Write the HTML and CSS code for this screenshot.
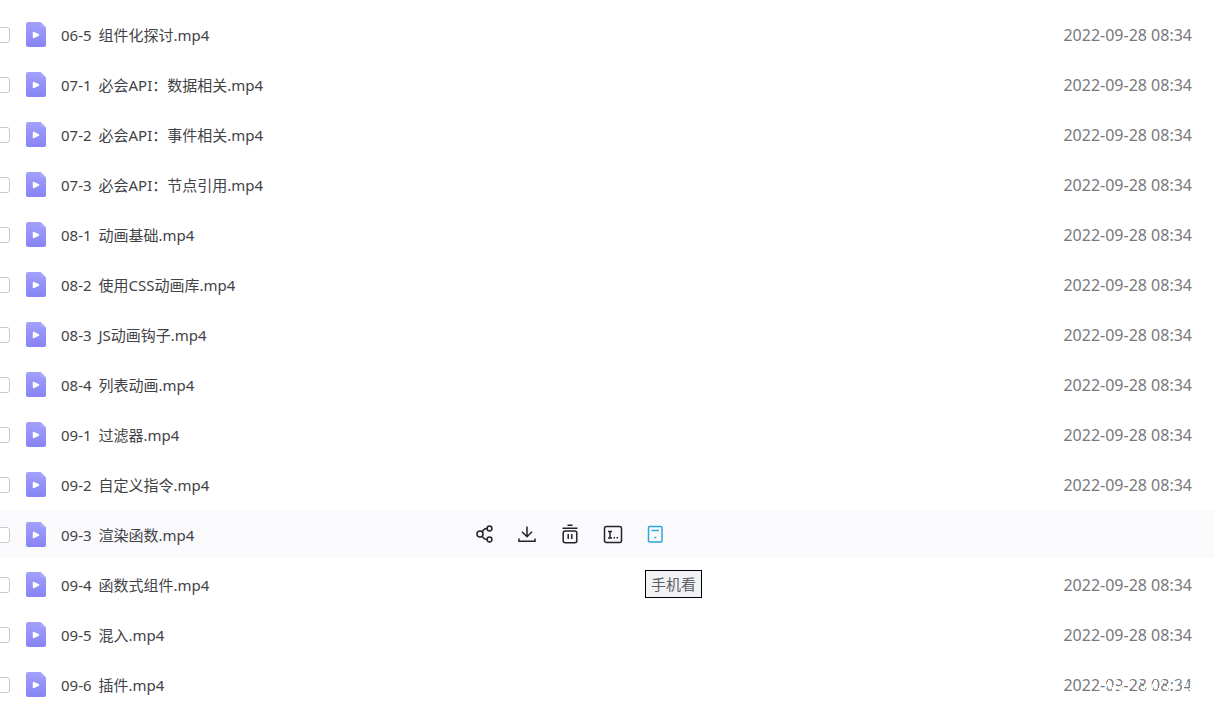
FILE: index.html
```html
<!DOCTYPE html>
<html lang="zh-CN">
<head>
  <meta charset="UTF-8">
  <meta name="viewport" content="width=device-width, initial-scale=1.0">
  <title>文件列表</title>
  <link rel="stylesheet" href="styles.css">
</head>
<body>
  <svg class="sprite" aria-hidden="true">
    <defs>
      <linearGradient id="file-fill" x1="0" y1="0" x2="0" y2="1">
        <stop offset="0" stop-color="#a3a1fb"/>
        <stop offset="1" stop-color="#8683f6"/>
      </linearGradient>
      <symbol id="video" viewBox="0 0 20 25">
        <path d="M2 0h12.500l5.500 5.500V23a2 2 0 0 1-2 2H2a2 2 0 0 1-2-2V2a2 2 0 0 1 2-2z" fill="url(#file-fill)"/>
        <path d="M14.500 0l5.500 5.500h-3.500a2 2 0 0 1-2-2z" fill="#a9a7fb"/>
        <path d="M7.500 10.500v5l5-2.500z" fill="#fff" stroke="#fff" stroke-width="1.500" stroke-linejoin="round"/>
      </symbol>
    </defs>
  </svg>

  <ul class="file-list" id="fileList"></ul>

  <template id="actions">
    <div class="actions">
      <button type="button" aria-label="分享">
        <svg viewBox="0 0 20 20"><circle cx="6" cy="10" r="3"/><circle cx="15.500" cy="4.500" r="2.400"/><circle cx="15.500" cy="15.500" r="2.400"/><path d="M8 8l1.800-2.300c.7-.9 1.500-1.200 3.300-1.200M8 12l1.800 2.300c.7.9 1.500 1.200 3.300 1.200"/></svg>
      </button>
      <button type="button" aria-label="下载">
        <svg viewBox="0 0 20 20"><path d="M10 2.500v10M5 7.800l5 5 5-5M2 14.500v2.700h16v-2.700"/></svg>
      </button>
      <button type="button" aria-label="删除">
        <svg viewBox="0 0 20 20"><path d="M7.500 1.200h5M2.500 4.200h15M8.200 10v5M11.800 10v5"/><rect x="3.200" y="7" width="13.600" height="11.800" rx="2"/></svg>
      </button>
      <button type="button" aria-label="重命名">
        <svg viewBox="0 0 20 20"><rect x="1.500" y="2.500" width="17" height="16" rx="2"/><path d="M5 7.500h4M7 7.500v6.500M5 14h4M10.500 13.700h1.500M13.500 13.700h1.500"/></svg>
      </button>
      <button type="button" class="active" aria-label="手机看" aria-describedby="tip">
        <svg viewBox="0 0 20 20"><rect x="2.500" y="2.500" width="13.500" height="15.500" rx="1"/><path d="M5.500 6.500h7.500M8.300 13.500h2"/></svg>
        <span class="tip" id="tip" role="tooltip">手机看</span>
      </button>
    </div>
  </template>

  <script>
    const files = [
      ["06-5", "组件化探讨"], ["07-1", "必会API：数据相关"], ["07-2", "必会API：事件相关"],
      ["07-3", "必会API：节点引用"], ["08-1", "动画基础"], ["08-2", "使用CSS动画库"],
      ["08-3", "JS动画钩子"], ["08-4", "列表动画"], ["09-1", "过滤器"], ["09-2", "自定义指令"],
      ["09-3", "渲染函数"], ["09-4", "函数式组件"], ["09-5", "混入"], ["09-6", "插件"]
    ];
    const current = 10;
    const list = document.getElementById('fileList');

    files.forEach(([no, name], i) => {
      const row = document.createElement('li');
      row.className = 'row';
      row.innerHTML = `
        <input type="checkbox" id="file${i}">
        <svg class="file-icon" aria-hidden="true"><use href="#video"/></svg>
        <label class="name" for="file${i}"><span class="no">${no}</span> ${name}.mp4</label>`;
      if (i === current) {
        row.classList.add('hover');
        row.append(document.getElementById('actions').content.cloneNode(true));
      } else {
        row.insertAdjacentHTML('beforeend', '<time class="date">2022-09-28 08:34</time>');
      }
      list.append(row);
    });
  </script>
</body>
</html>
```

FILE: styles.css
```css
* {
  box-sizing: border-box;
}
body {
  margin: 0;
  background: #fff;
  color: #424347;
  font-family: "Noto Sans", "Noto Sans CJK SC", sans-serif;
  font-size: 15px;
}
.sprite {
  position: absolute;
  width: 0; height: 0;
}
.file-list {
  margin: 0;
  padding: 10px 0 0;
  list-style: none;
  overflow: hidden;
}
.row {
  display: flex; align-items: center;
  height: 48px;
  margin-bottom: 2px;
  padding-right: 22px;
}
.row.hover {
  background: #fafafc;
}
.row input {
  appearance: none;
  flex: none;
  width: 16px; height: 16px;
  margin: 2px 16px 0 -6px;
  border: 1px solid #c9cacf;
  border-radius: 3px;
  background: #fff;
}
.file-icon {
  flex: none;
  width: 20px; height: 25px;
}
.name {
  width: 400px;
  margin-left: 15px;
  padding-top: 2px;
  line-height: 20px;
  white-space: nowrap;
}
.no {
  margin-right: 3px;
}
.date {
  position: relative;
  margin-left: auto;
  padding-top: 2px;
  color: #77787c;
  font-size: 16px;
  line-height: 20px;
}
/* white watermark specks over the last date */
.row:last-child .date::after {
  content: "";
  position: absolute;
  top: 7px; right: 0;
  width: 97px; height: 10px;
  background: repeating-linear-gradient(115deg, transparent 0 5px, #fff 5px 7px);
}
.actions {
  display: flex;
  gap: 23px;
  margin-left: 13px;
}
.actions button {
  position: relative;
  width: 20px; height: 20px;
  padding: 0;
  border: 0;
  background: none;
  color: #22232b;
  font: inherit;
  cursor: pointer;
}
.actions button.active {
  color: #2ca5e0;
}
.actions svg {
  display: block;
  width: 20px; height: 20px;
  fill: none;
  stroke: currentColor;
  stroke-width: 1.5;
}
.tip {
  position: absolute;
  top: 46px; left: -1px;
  padding: 3px 5px;
  border: 1px solid #000;
  background: #f1f2f6;
  color: #606165;
  line-height: 20px;
  white-space: nowrap;
}
```
